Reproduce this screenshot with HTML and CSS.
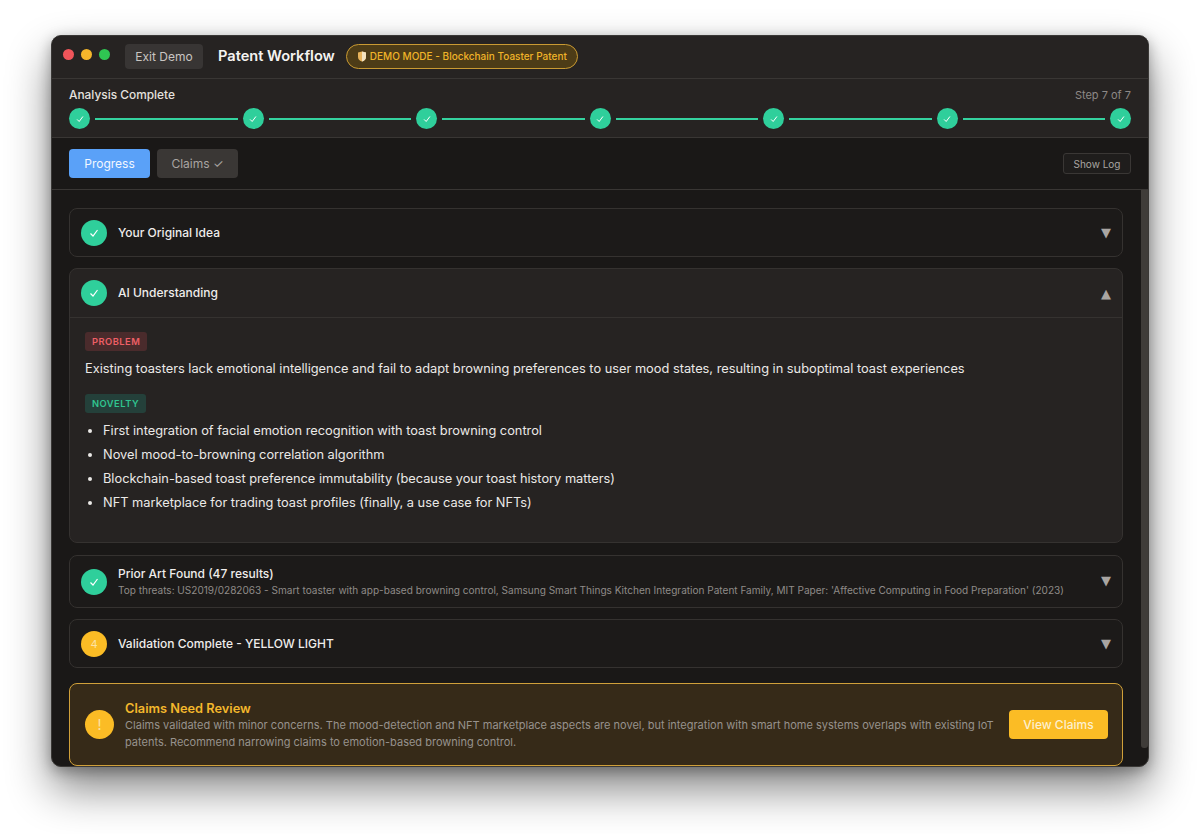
FILE: index.html
```html
<!DOCTYPE html>
<html lang="en">

<head>
	<meta charset="UTF-8">
	<title>Patent Workflow</title>

	<link rel="stylesheet" href="styles.css">
</head>

<body>

	<svg class="defs" width="0" height="0">
		<symbol id="check" viewBox="0 0 12 12">
			<polyline points="2.5,6.5 5,9 9.5,3" fill="none" stroke="currentColor" stroke-width="1.2" />
		</symbol>
	</svg>

	<main class="window">
		<header class="titlebar">
			<div class="lights">
				<span class="red"></span>
				<span class="yellow"></span>
				<span class="green"></span>
			</div>
			<button class="exit">Exit Demo</button>
			<h1>Patent Workflow</h1>
			<div class="demo_badge">
				<svg width="10" height="11" viewBox="0 0 10 11">
					<path d="M1 1.5 L5 .5 L9 1.5 V6 C9 8.5 7 10 5 10.5 C3 10 1 8.5 1 6 Z" fill="#e8b45c" />
					<path d="M5 .5 L9 1.5 V6 C9 8.5 7 10 5 10.5 Z" fill="#f3e3c0" />
				</svg>
				DEMO MODE - Blockchain Toaster Patent
			</div>
		</header>

		<section class="progress">
			<div class="progress_labels">
				<span class="status">Analysis Complete</span>
				<span class="step_count">Step 7 of 7</span>
			</div>
			<div class="steps">
				<span class="step"><svg><use href="#check"></use></svg></span>
				<span class="line"></span>
				<span class="step"><svg><use href="#check"></use></svg></span>
				<span class="line"></span>
				<span class="step"><svg><use href="#check"></use></svg></span>
				<span class="line"></span>
				<span class="step"><svg><use href="#check"></use></svg></span>
				<span class="line"></span>
				<span class="step"><svg><use href="#check"></use></svg></span>
				<span class="line"></span>
				<span class="step"><svg><use href="#check"></use></svg></span>
				<span class="line"></span>
				<span class="step"><svg><use href="#check"></use></svg></span>
			</div>
		</section>

		<nav class="tabs">
			<button class="tab active">Progress</button>
			<button class="tab">Claims ✓</button>
			<button class="show_log">Show Log</button>
		</nav>

		<div class="content">
			<div class="scrollbar"></div>

			<section class="card">
				<div class="card_head">
					<span class="icon done"><svg><use href="#check"></use></svg></span>
					<div class="card_title">Your Original Idea</div>
					<span class="chevron">▼</span>
				</div>
			</section>

			<section class="card open">
				<div class="card_head">
					<span class="icon done"><svg><use href="#check"></use></svg></span>
					<div class="card_title">AI Understanding</div>
					<span class="chevron">▲</span>
				</div>
				<div class="card_body">
					<span class="tag problem">PROBLEM</span>
					<p>Existing toasters lack emotional intelligence and fail to adapt browning preferences to user mood states, resulting in suboptimal toast experiences</p>
					<span class="tag novelty">NOVELTY</span>
					<ul>
						<li>First integration of facial emotion recognition with toast browning control</li>
						<li>Novel mood-to-browning correlation algorithm</li>
						<li>Blockchain-based toast preference immutability (because your toast history matters)</li>
						<li>NFT marketplace for trading toast profiles (finally, a use case for NFTs)</li>
					</ul>
				</div>
			</section>

			<section class="card">
				<div class="card_head tall">
					<span class="icon done"><svg><use href="#check"></use></svg></span>
					<div class="card_title">
						Prior Art Found (47 results)
						<small>Top threats: US2019/0282063 - Smart toaster with app-based browning control, Samsung Smart Things Kitchen Integration Patent Family, MIT Paper: 'Affective Computing in Food Preparation' (2023)</small>
					</div>
					<span class="chevron">▼</span>
				</div>
			</section>

			<section class="card">
				<div class="card_head">
					<span class="icon warn">4</span>
					<div class="card_title">Validation Complete - YELLOW LIGHT</div>
					<span class="chevron">▼</span>
				</div>
			</section>

			<section class="review">
				<span class="review_icon">!</span>
				<div class="review_text">
					<h2>Claims Need Review</h2>
					<p>Claims validated with minor concerns. The mood-detection and NFT marketplace aspects are novel, but integration with smart home systems overlaps with existing IoT patents. Recommend narrowing claims to emotion-based browning control.</p>
				</div>
				<button class="view_claims">View Claims</button>
			</section>
		</div>
	</main>

</body>

</html>
```

FILE: styles.css
```css
* {
	box-sizing: border-box;
}

html,
body {
	height: 100%;
}

body {
	margin: 0;
	padding: 35px 51px 67px;
	background-color: #fff;
	font-family: Inter, "Liberation Sans", sans-serif;
	overflow: hidden;
}

button {
	font-family: inherit;
	border: 0;
	cursor: pointer;
}

.defs {
	position: absolute;
}

.window {
	height: 732px;
	display: flex;
	flex-direction: column;
	background-color: #1a1817;
	border: 1px solid #3a3836;
	border-radius: 10px;
	overflow: hidden;
	box-shadow: 0 22px 44px rgba(0, 0, 0, 0.48), 0 4px 14px rgba(0, 0, 0, 0.3);
}

.titlebar {
	height: 43px;
	flex: none;
	display: flex;
	align-items: center;
	padding: 0 0 2px 11px;
	background-color: #262322;
	border-bottom: 1px solid #393634;
}

.lights {
	display: flex;
	gap: 7px;
	margin-right: 15px;
	margin-top: -4px;
}

.lights span {
	width: 11px;
	height: 11px;
	border-radius: 50%;
}

.red {
	background-color: #f0555a;
}

.yellow {
	background-color: #f5b62b;
}

.green {
	background-color: #2fc552;
}

.exit {
	width: 78px;
	height: 25px;
	border-radius: 4px;
	background-color: #383534;
	color: #c9c5c2;
	font-size: 12px;
}

h1 {
	margin: 0 11px 0 15px;
	color: #f5f3f1;
	font-size: 14.6px;
	font-weight: 600;
}

.demo_badge {
	width: 232px;
	height: 25px;
	display: flex;
	align-items: center;
	justify-content: center;
	gap: 3px;
	border: 1px solid #c99a33;
	border-radius: 13px;
	background-color: #4d3c17;
	color: #f0b429;
	font-size: 10px;
	font-weight: 500;
	white-space: nowrap;
}

.progress {
	height: 59px;
	flex: none;
	padding: 8px 17px 0;
	background-color: #262322;
	border-bottom: 1px solid #393634;
}

.progress_labels {
	display: flex;
	justify-content: space-between;
	font-size: 11.9px;
	line-height: 16px;
	margin-bottom: 5px;
}

.status {
	color: #e4e1de;
	font-weight: 450;
}

.step_count {
	color: #8d8986;
	font-size: 11px;
}

.steps {
	display: flex;
	align-items: center;
	gap: 5px;
}

.step {
	width: 21px;
	height: 21px;
	flex: none;
	display: flex;
	align-items: center;
	justify-content: center;
	border-radius: 50%;
	background-color: #2fcf9b;
	color: #fff;
}

.step svg {
	width: 10px;
	height: 10px;
}

.line {
	flex: 1;
	height: 2px;
	background-color: #34d29f;
}

.tabs {
	height: 52px;
	flex: none;
	display: flex;
	align-items: center;
	gap: 7px;
	padding: 0 17px;
	background-color: #1a1817;
	border-bottom: 1px solid #393634;
}

.tab {
	width: 81px;
	height: 29px;
	border-radius: 4px;
	background-color: #3a3735;
	color: #a9a5a2;
	font-family: Inter, "DejaVu Sans", sans-serif;
	font-size: 12px;
}

.tab.active {
	background-color: #5aa1f8;
	color: #f2f7ff;
}

.show_log {
	width: 68px;
	height: 21px;
	margin-left: auto;
	border: 1px solid #3a3735;
	border-radius: 3px;
	background-color: #1f1d1c;
	color: #a9a5a2;
	font-size: 10px;
}

.content {
	position: relative;
	flex: 1;
	padding: 18px 25px 0 17px;
	overflow: hidden;
}

.scrollbar {
	position: absolute;
	top: 0;
	right: 0;
	width: 7px;
	height: 558px;
	background-color: #3f3c39;
	border-radius: 0 0 3px 3px;
}

.card {
	margin-bottom: 11px;
	border: 1px solid #353230;
	border-radius: 8px;
	background-color: #1c1a19;
}

.card.open {
	background-color: #262322;
	margin-bottom: 12px;
}

.card_head {
	height: 47px;
	display: flex;
	align-items: center;
	gap: 11px;
	padding: 0 11px;
}

.card_head.tall {
	height: 51px;
}

.tall .card_title {
	padding-top: 1px;
}

.tall .chevron {
	margin-top: -2px;
}

.open .card_head {
	height: 49px;
	border-bottom: 1px solid #353230;
}

.icon {
	width: 26px;
	height: 26px;
	flex: none;
	display: flex;
	align-items: center;
	justify-content: center;
	border-radius: 50%;
	color: #fff;
	font-size: 11px;
}

.icon svg {
	width: 12px;
	height: 12px;
}

.done {
	background-color: #2fcf9b;
}

.warn {
	background-color: #fbbc25;
	color: #fbe3a5;
}

.card_title {
	flex: 1;
	min-width: 0;
	color: #efedeb;
	font-size: 12px;
	font-weight: 450;
	line-height: 16px;
}

.card_title small {
	display: block;
	color: #8f8b88;
	font-size: 10.05px;
	font-weight: 400;
	line-height: 17px;
	white-space: nowrap;
}

.chevron {
	width: 10px;
	flex: none;
	color: #a9a5a2;
	font-family: "DejaVu Sans", sans-serif;
	font-size: 13px;
	text-align: center;
}

.card_body {
	height: 224px;
	padding: 14px 15px;
}

.tag {
	display: block;
	width: fit-content;
	height: 19px;
	padding: 0 7px;
	border-radius: 3px;
	font-size: 9.3px;
	font-weight: 600;
	letter-spacing: 0.5px;
	line-height: 19px;
}

.problem {
	background-color: #4a2b2c;
	color: #ee5f66;
}

.novelty {
	background-color: #24403a;
	color: #30c590;
}

.card_body p {
	margin: 8px 0 15px;
	color: #ebe9e7;
	font-size: 12.8px;
	line-height: 20px;
}

.card_body ul {
	margin: 6px 0 0;
	padding-left: 18px;
	color: #ebe9e7;
	font-size: 12.8px;
	line-height: 24px;
}

.review {
	height: 83px;
	display: flex;
	align-items: center;
	margin-top: 15px;
	padding: 0 14px 0 15px;
	border: 1px solid #d0a03a;
	border-radius: 8px;
	background-color: #362a18;
}

.review_icon {
	width: 29px;
	height: 29px;
	flex: none;
	display: flex;
	align-items: center;
	justify-content: center;
	margin-right: 11px;
	border-radius: 50%;
	background-color: #fbbc25;
	color: #fbe3a5;
	font-size: 14px;
}

.review_text {
	flex: 1;
	padding-top: 1px;
}

h2 {
	margin: 0;
	color: #f3b72c;
	font-size: 12.8px;
	font-weight: 600;
	line-height: 17px;
}

.review_text p {
	margin: 0;
	width: 872px;
	color: #97928d;
	font-size: 11px;
	line-height: 17px;
}

.view_claims {
	width: 99px;
	height: 29px;
	flex: none;
	border-radius: 4px;
	background-color: #fbbc25;
	color: #fdf0cf;
	font-size: 12px;
	font-weight: 500;
}
```
